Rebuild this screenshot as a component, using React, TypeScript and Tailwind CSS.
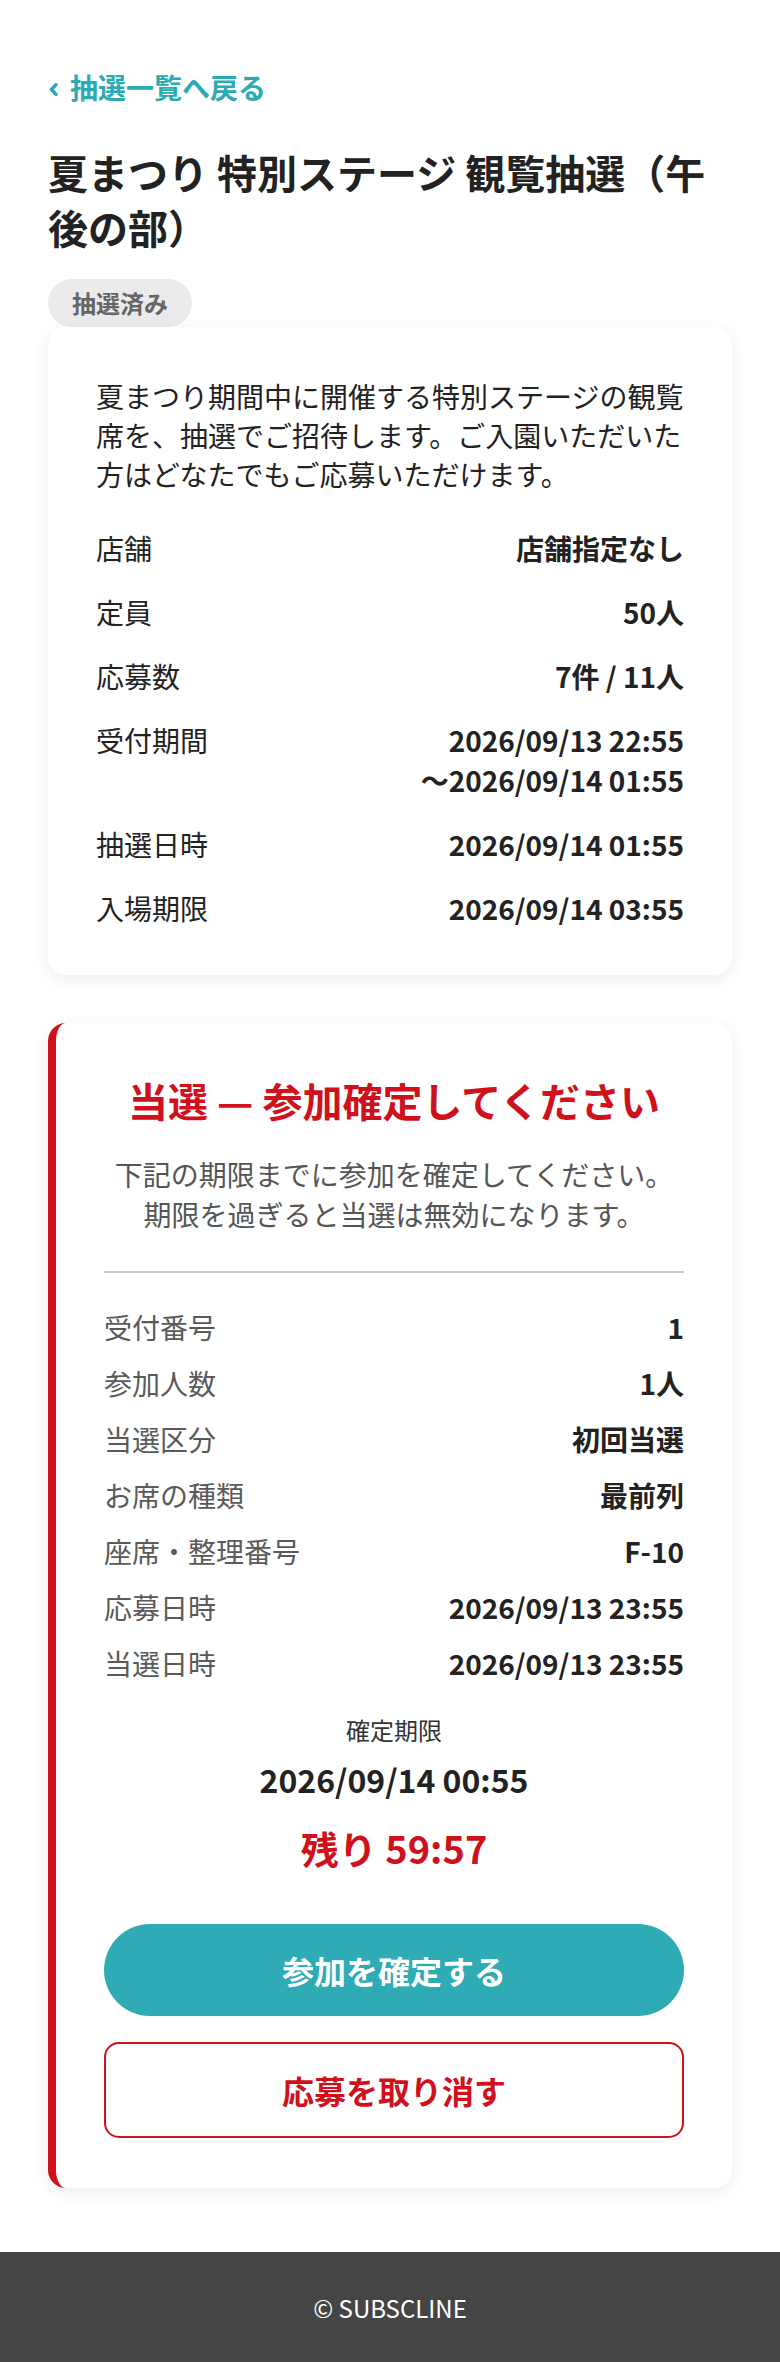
import React from "react";

const Row1 = ({ label, children }: { label: string; children: React.ReactNode }) => (
  <div className="flex justify-between py-[12px] text-[28px] leading-[40px] text-[#222]">
    <span>{label}</span>
    <span className="text-right font-bold">{children}</span>
  </div>
);

const Row2 = ({ label, value }: { label: string; value: string }) => (
  <div className="flex justify-between py-[8px] text-[28px] leading-[40px]">
    <span className="text-[#5a5a5a]">{label}</span>
    <span className="text-right font-bold text-[#222]">{value}</span>
  </div>
);

export default function App() {
  return (
    <div className="flex min-h-screen flex-col bg-white font-['Noto_Sans_CJK_JP','Noto_Sans',sans-serif]">
      <main className="px-[48px] pt-[67px] pb-[64px]">
        <a className="flex items-center text-[28px] leading-[40px] font-bold text-[#2aabb4]">
          <svg width="9" height="13" viewBox="0 0 9 13" className="ml-[1px] mr-[12px] mt-[4px]" fill="none">
            <path d="M7 1.6 L2.4 6.5 L7 11.4" stroke="#2aabb4" strokeWidth="3.4" strokeLinecap="round" strokeLinejoin="round" />
          </svg>
          抽選一覧へ戻る
        </a>
        <h1 className="mt-[38px] text-[40px] leading-[55px] font-bold text-[#222]">
          夏まつり 特別ステージ 観覧抽選（午後の部）
        </h1>
        <div className="mt-[24px] flex h-[48px] w-fit items-center rounded-full bg-[#ebebeb] px-[24px] text-[24px] font-bold text-[#666]">
          抽選済み
        </div>

        <section className="rounded-[18px] bg-white px-[48px] pt-[50px] pb-[35px] shadow-[0_4px_18px_rgba(0,0,0,0.08)]">
          <p className="mb-[22px] text-[28px] leading-[39px] text-[#222]">
            夏まつり期間中に開催する特別ステージの観覧席を、抽選でご招待します。ご入園いただいた方はどなたでもご応募いただけます。
          </p>
          <Row1 label="店舗">店舗指定なし</Row1>
          <Row1 label="定員">50人</Row1>
          <Row1 label="応募数">7件 / 11人</Row1>
          <Row1 label="受付期間">
            2026/09/13 22:55
            <br />～2026/09/14 01:55
          </Row1>
          <Row1 label="抽選日時">2026/09/14 01:55</Row1>
          <Row1 label="入場期限">2026/09/14 03:55</Row1>
        </section>

        <section className="mt-[48px] rounded-[18px] border-l-[8px] border-[#d0111c] bg-white px-[48px] pt-[49px] pb-[50px] shadow-[0_4px_18px_rgba(0,0,0,0.08)]">
          <h2 className="text-center text-[40px] leading-[56px] font-bold text-[#d0111c]">
            当選 — 参加確定してください
          </h2>
          <p className="mt-[26px] text-center text-[28px] leading-[40px] text-[#555]">
            下記の期限までに参加を確定してください。
            <br />
            期限を過ぎると当選は無効になります。
          </p>
          <div className="mt-[37px] h-[2px] bg-[#c8c8c8]" />
          <div className="mt-[26px]">
            <Row2 label="受付番号" value="1" />
            <Row2 label="参加人数" value="1人" />
            <Row2 label="当選区分" value="初回当選" />
            <Row2 label="お席の種類" value="最前列" />
            <Row2 label="座席・整理番号" value="F-10" />
            <Row2 label="応募日時" value="2026/09/13 23:55" />
            <Row2 label="当選日時" value="2026/09/13 23:55" />
          </div>
          <div className="mt-[22px] text-center text-[24px] leading-[34px] text-[#333]">確定期限</div>
          <div className="mt-[10px] text-center text-[32px] leading-[45px] font-bold text-[#222]">
            2026/09/14 00:55
          </div>
          <div className="mt-[18px] text-center text-[38px] leading-[55px] font-bold text-[#d0111c]">
            残り 59:57
          </div>
          <button className="mt-[49px] flex h-[92px] w-full items-center justify-center rounded-full bg-[#2eabb5] text-[32px] font-bold text-white">
            参加を確定する
          </button>
          <button className="mt-[26px] flex h-[96px] w-full items-center justify-center rounded-[15px] border-2 border-[#d0111c] bg-white text-[32px] font-bold text-[#d0111c]">
            応募を取り消す
          </button>
        </section>
      </main>
      <footer className="flex h-[112px] items-center justify-center bg-[#454545] text-[24px] text-white">
        © SUBSCLINE
      </footer>
    </div>
  );
}
